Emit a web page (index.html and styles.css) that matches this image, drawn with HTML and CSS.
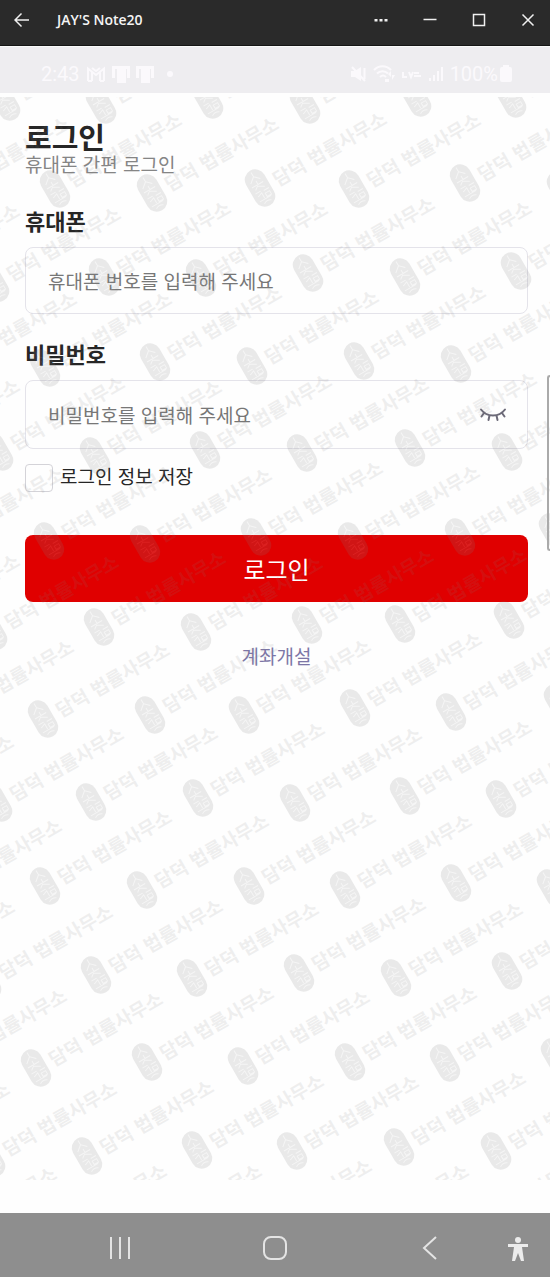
FILE: index.html
```html
<!DOCTYPE html>
<html lang="ko">
<head>
<meta charset="utf-8">
<meta name="viewport" content="width=device-width, initial-scale=1">
<title>로그인</title>
<link rel="stylesheet" href="styles.css">
</head>
<body>
<header class="titlebar">
  <button class="tb-btn tb-back" type="button" aria-label="Back"><svg width="16" height="16" viewBox="0 0 16 16"><path d="M15 8H1.500M7.500 1.500 1 8l6.500 6.500"/></svg></button>
  <span class="tb-title">JAY'S Note20</span>
  <div class="tb-controls">
    <button class="tb-btn" type="button" aria-label="More"><svg width="14" height="14" viewBox="0 0 14 14"><path class="dots" d="M.5 6h3v2.500h-3zM5.500 6h3v2.500h-3zM10.500 6h3v2.500h-3z"/></svg></button>
    <button class="tb-btn" type="button" aria-label="Minimize"><svg width="14" height="14" viewBox="0 0 14 14"><path d="M.5 6.500h13"/></svg></button>
    <button class="tb-btn" type="button" aria-label="Maximize"><svg width="14" height="14" viewBox="0 0 14 14"><path d="M1.500 1.500h11v11h-11z"/></svg></button>
    <button class="tb-btn" type="button" aria-label="Close"><svg width="14" height="14" viewBox="0 0 14 14"><path d="M1.500 1.500l11 11M12.500 1.500l-11 11"/></svg></button>
  </div>
</header>

<div class="statusbar">
  <div class="st-group">
    <span>2:43</span>
    <svg width="20" height="16" viewBox="0 0 20 16"><path class="line" d="M2 15V2.500L10 9l8-6.500V15M6 15V6.500M14 15V6.500M2 15h4M14 15h4M6 2l4 3 4-3"/></svg>
    <svg width="18" height="18" viewBox="0 0 18 18"><path d="M0 1h18v12h-3V4h-1v14H5V4H3v9H0z"/></svg>
    <svg width="18" height="18" viewBox="0 0 18 18"><path d="M0 1h18v12h-3V4h-1v14H5V4H3v9H0z"/></svg>
    <svg class="st-dot" width="6" height="6" viewBox="0 0 6 6"><circle cx="3" cy="3" r="3"/></svg>
  </div>
  <div class="st-group st-right">
    <svg width="16" height="16" viewBox="0 0 16 16"><path d="M1 5h4l6-4v14l-6-4H1z"/><path class="line" d="M2 1l13 14M14.500 2v11"/></svg>
    <svg width="22" height="18" viewBox="0 0 22 18"><path class="line" d="M1 5c5-5 12-5 17 0M4 8.500c3-3 8-3 11 0M7 12c2-2 4-2 6 0"/><path d="M15 9l3-3v6zM19 10h3l-3 5zM12 14h4v3h-4z"/></svg>
    <svg width="20" height="14" viewBox="0 0 20 14"><path class="line" d="M1 5v5h4M7 5l2 5 2-5M12 9h7M12 6h5"/></svg>
    <svg width="14" height="16" viewBox="0 0 14 16"><path d="M0 12h2v3H0zM4 9h2v6H4zM8 5h2v10H8zM12 1h2v14h-2z"/></svg>
    <span class="st-pct">100%</span>
    <svg width="12" height="17" viewBox="0 0 12 17"><path d="M3 0h6v2h1q2 0 2 2v11q0 2-2 2H2q-2 0-2-2V4q0-2 2-2h1z"/></svg>
  </div>
</div>

<main class="screen">
  <form class="login">
    <h1 class="heading">로그인</h1>
    <p class="sub">휴대폰 간편 로그인</p>
    <label class="label" for="phone">휴대폰</label>
    <input class="field" id="phone" type="tel" placeholder="휴대폰 번호를 입력해 주세요">
    <label class="label label-next" for="pw">비밀번호</label>
    <div class="field field-pw">
      <input class="pw-input" id="pw" type="password" placeholder="비밀번호를 입력해 주세요">
      <button class="eye" type="button" aria-label="비밀번호 표시"><svg width="28" height="14" viewBox="0 0 28 14"><path d="M2 1.500c6 8 18 8 24 0M5 5 2.500 8.500M10.500 7.500 9.500 12M17.500 7.500l1 4.500M23 5l2.500 3.500"/></svg></button>
    </div>
    <div class="save">
      <input class="check" id="save" type="checkbox">
      <label for="save">로그인 정보 저장</label>
    </div>
    <button class="submit" type="submit">로그인</button>
    <a class="open" href="#">계좌개설</a>
  </form>

  <svg class="watermark" aria-hidden="true">
    <defs>
      <g id="m">
        <g transform="rotate(-30)">
          <path d="M-10.500-9.500a10.500 10.500 0 0 1 21 0v19a10.500 10.500 0 0 1-21 0z"/>
          <path class="carve" d="M0-18v5M0-13l-6 5M0-13l5 5M-7-4h13M0-8v4M-5 0l4-3 6 4M-7 3h6M2 4h6M-6 7l5-2v6M2 7h5v4H2zM-7 12h13M-4 16c3-2 5-2 8 0"/>
          <text x="16" y="8">담덕 법률사무소</text>
        </g>
      </g>
    </defs>
    <g transform="translate(0 -97)">
      <use href="#m" x="5" y="102"/><use href="#m" x="101" y="105"/><use href="#m" x="208" y="100"/><use href="#m" x="305" y="105"/><use href="#m" x="416" y="98"/><use href="#m" x="511" y="99"/>
      <use href="#m" x="-57" y="193"/><use href="#m" x="55" y="189"/><use href="#m" x="152" y="193"/><use href="#m" x="260" y="188"/><use href="#m" x="354" y="189"/><use href="#m" x="465" y="183"/><use href="#m" x="562" y="190"/>
      <use href="#m" x="-107" y="280"/><use href="#m" x="-6" y="283"/><use href="#m" x="104" y="277"/><use href="#m" x="201" y="278"/><use href="#m" x="308" y="273"/><use href="#m" x="405" y="277"/><use href="#m" x="516" y="271"/>
      <use href="#m" x="-50" y="368"/><use href="#m" x="45" y="368"/><use href="#m" x="155" y="362"/><use href="#m" x="252" y="366"/><use href="#m" x="359" y="361"/><use href="#m" x="456" y="364"/>
      <use href="#m" x="-107" y="455"/><use href="#m" x="-2" y="452"/><use href="#m" x="95" y="456"/><use href="#m" x="205" y="450"/><use href="#m" x="302" y="453"/><use href="#m" x="410" y="448"/><use href="#m" x="507" y="452"/>
      <use href="#m" x="-63" y="543"/><use href="#m" x="49" y="541"/><use href="#m" x="145" y="544"/><use href="#m" x="256" y="537"/><use href="#m" x="353" y="541"/><use href="#m" x="460" y="537"/><use href="#m" x="554" y="532"/>
      <use href="#m" x="-107" y="630"/><use href="#m" x="-8" y="631"/><use href="#m" x="99" y="627"/><use href="#m" x="196" y="632"/><use href="#m" x="307" y="625"/><use href="#m" x="400" y="624"/><use href="#m" x="509" y="620"/>
      <use href="#m" x="-53" y="716"/><use href="#m" x="43" y="719"/><use href="#m" x="150" y="715"/><use href="#m" x="244" y="715"/><use href="#m" x="355" y="708"/><use href="#m" x="451" y="712"/><use href="#m" x="559" y="703"/>
      <use href="#m" x="-113" y="811"/><use href="#m" x="-3" y="803"/><use href="#m" x="91" y="802"/><use href="#m" x="198" y="798"/><use href="#m" x="295" y="803"/><use href="#m" x="405" y="796"/><use href="#m" x="501" y="799"/>
      <use href="#m" x="-65" y="895"/><use href="#m" x="45" y="886"/><use href="#m" x="142" y="890"/><use href="#m" x="249" y="886"/><use href="#m" x="345" y="890"/><use href="#m" x="456" y="883"/><use href="#m" x="552" y="888"/>
      <use href="#m" x="-112" y="976"/><use href="#m" x="-14" y="981"/><use href="#m" x="96" y="975"/><use href="#m" x="192" y="978"/><use href="#m" x="299" y="973"/><use href="#m" x="396" y="978"/><use href="#m" x="507" y="971"/>
      <use href="#m" x="-60" y="1065"/><use href="#m" x="36" y="1068"/><use href="#m" x="147" y="1062"/><use href="#m" x="243" y="1066"/><use href="#m" x="350" y="1062"/><use href="#m" x="445" y="1063"/><use href="#m" x="556" y="1057"/>
      <use href="#m" x="-117" y="1158"/><use href="#m" x="-10" y="1158"/><use href="#m" x="87" y="1156"/><use href="#m" x="197" y="1150"/><use href="#m" x="292" y="1151"/><use href="#m" x="399" y="1147"/><use href="#m" x="496" y="1151"/>
      <use href="#m" x="-70" y="1243"/><use href="#m" x="40" y="1240"/><use href="#m" x="135" y="1240"/><use href="#m" x="245" y="1235"/><use href="#m" x="342" y="1240"/><use href="#m" x="452" y="1237"/>
    </g>
  </svg>
  <div class="edge-handle"></div>
</main>

<nav class="navbar">
  <button class="nav-btn" type="button" aria-label="Recents"><svg width="24" height="24" viewBox="0 0 24 24"><path d="M3 1v22M12 1v22M21 1v22"/></svg></button>
  <button class="nav-btn" type="button" aria-label="Home"><svg width="24" height="24" viewBox="0 0 24 24"><rect x="1" y="1" width="22" height="22" rx="7"/></svg></button>
  <button class="nav-btn" type="button" aria-label="Back"><svg width="24" height="24" viewBox="0 0 24 24"><path d="M18 1 6 12l12 11"/></svg></button>
  <button class="nav-btn nav-a11y" type="button" aria-label="Accessibility"><svg width="22" height="26" viewBox="0 0 22 26"><g class="solid"><circle cx="11" cy="4" r="3"/><path d="M1 8h20v3h-6l2 14h-3l-3-8-3 8H5l2-14H1z"/></g></svg></button>
</nav>
</body>
</html>
```
FILE: styles.css
```css
* { box-sizing: border-box; }

body {
  margin: 0;
  min-height: 100vh;
  display: flex;
  flex-direction: column;
  background: #fefefe;
  color: #262626;
  font-family: "Noto Sans CJK KR", sans-serif;
}

button { border: 0; padding: 0; background: none; font: inherit; color: inherit; }
svg { display: block; flex: none; }

/* Window title bar */
.titlebar {
  display: flex;
  align-items: center;
  height: 46px;
  padding: 0 0 5px;
  background: #2a2a2a;
  border-bottom: 1px solid #151515;
  color: #f4f4f4;
}
.tb-btn { display: grid; place-items: center; width: 49px; height: 38px; }
.tb-btn svg { fill: none; stroke: #f0f0f0; stroke-width: 1.5; }
.tb-btn .dots { fill: #f0f0f0; stroke: none; }
.tb-back { width: 44px; }
.tb-title { margin-left: 13px; font: 600 14px/20px "Open Sans", sans-serif; }
.tb-controls { display: flex; margin: 0 -2px 0 auto; }

/* Phone status bar */
.statusbar {
  display: flex;
  align-items: center;
  justify-content: space-between;
  height: 47px;
  margin-bottom: 4px;
  padding: 7px 38px 0 41px;
  border-top: 1px solid #fafafa;
  background: #eeedf0;
  color: #fbf9fc;
  font: 20px/24px Roboto, sans-serif;
}
.st-group { display: flex; align-items: center; gap: 6px; }
.st-group svg { fill: #fbf9fc; }
.st-group .line { fill: none; stroke: #fbf9fc; stroke-width: 2; }
.st-dot { margin-left: 7px; }
.st-right { gap: 7px; }
.st-pct { margin-right: -5px; }

/* Login screen */
.screen {
  position: relative;
  flex: 1;
  margin-bottom: 33px;
  padding: 23px 22px 40px 25px;
}
.login { display: flex; flex-direction: column; }
.heading { margin: 0; font-size: 29px; line-height: 32px; font-weight: 700; }
.sub { margin: 0 0 32px; font-size: 19px; line-height: 23px; color: #858585; }
.label { margin-bottom: 14px; font-size: 22px; line-height: 26px; font-weight: 700; }
.label-next { margin-top: 26px; }
.field {
  width: 100%;
  height: 67px;
  padding: 0 20px 0 22px;
  border: 1px solid #e4e3ea;
  border-radius: 8px;
  background: transparent;
  font: 19px/28px "Noto Sans CJK KR", sans-serif;
}
.field-pw { display: flex; align-items: center; height: 69px; }
.pw-input {
  flex: 1;
  min-width: 0;
  padding: 0;
  border: 0;
  background: transparent;
  font: inherit;
}
input::placeholder { color: #777; opacity: 1; }
.eye svg { fill: none; stroke: #6c6a78; stroke-width: 2; stroke-linecap: round; }
.save {
  display: flex;
  align-items: flex-start;
  align-self: flex-start;
  gap: 7px;
  height: 28px;
  margin-top: 15px;
  font-size: 19px;
  line-height: 24px;
}
.check {
  appearance: none;
  width: 28px;
  height: 28px;
  margin: 0;
  border: 1px solid #d4d3d8;
  border-radius: 4px;
}
.submit {
  height: 67px;
  margin-top: 43px;
  border-radius: 8px;
  background: #e00000;
  color: #fff;
  font-size: 24px;
}
.open {
  align-self: center;
  margin-top: 40px;
  color: #7d76a6;
  font-size: 19px;
  line-height: 28px;
  text-decoration: none;
}

/* Watermark laid over the whole screen */
.watermark {
  position: absolute;
  inset: 0;
  width: 100%;
  height: 100%;
  overflow: hidden;
  pointer-events: none;
  fill: #808080;
  opacity: 0.16;
}
.watermark text {
  font: 700 19px "Noto Sans CJK KR", sans-serif;
  fill-opacity: 0.75;
}
.watermark .carve { fill: none; stroke: #c8c8c8; stroke-width: 1; }

.edge-handle {
  position: absolute;
  top: 278px;
  right: 0;
  width: 3px;
  height: 176px;
  border: 2px solid #aaa;
  border-right: 0;
  border-radius: 4px 0 0 4px;
}

/* Android navigation bar */
.navbar {
  display: grid;
  grid-template-columns: 43.6% 12.8% 43.6%;
  position: relative;
  height: 64px;
  padding-top: 6px;
  background: #8e8e8e;
}
.nav-btn { display: grid; place-items: center; }
.nav-btn svg { fill: none; stroke: #e4e4e4; stroke-width: 2; }
.nav-btn .solid { fill: #ececec; stroke: none; }
.nav-a11y { position: absolute; right: 21px; top: 23px; }
```
